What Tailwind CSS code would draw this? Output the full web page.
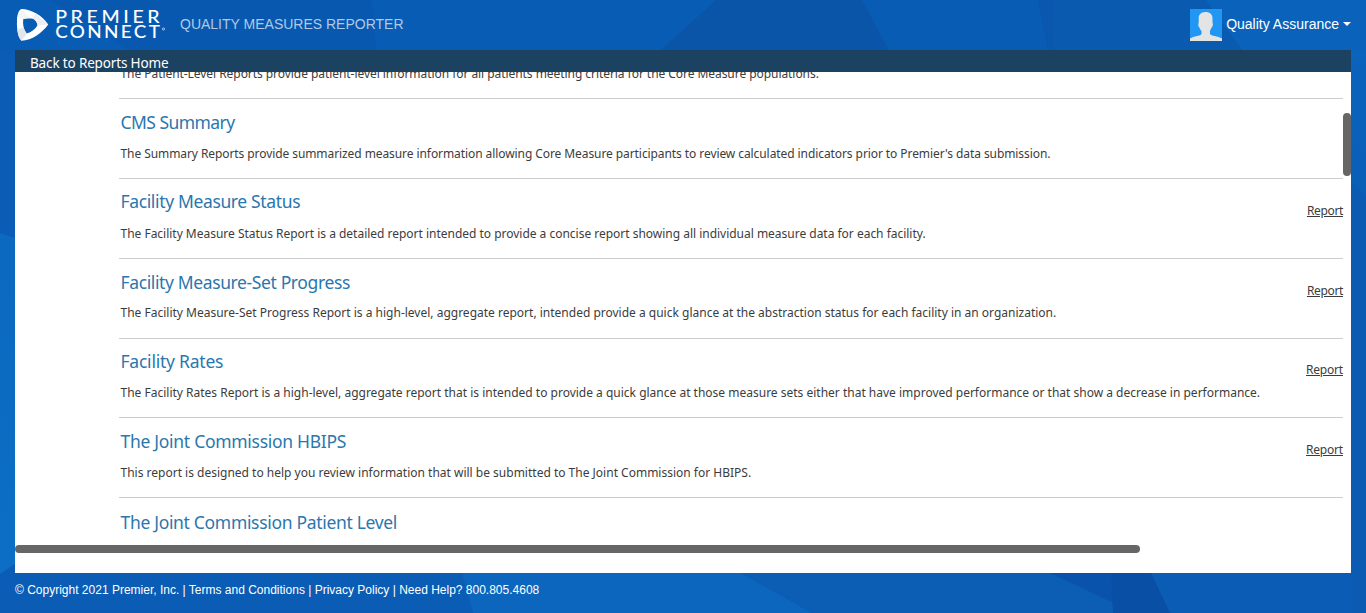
<!DOCTYPE html>
<html lang="en">
<head>
<meta charset="utf-8">
<title>Quality Measures Reporter</title>
<script src="https://cdn.jsdelivr.net/npm/@tailwindcss/browser@4"></script>
</head>
<body class="relative isolate flex h-[613px] w-[1366px] flex-col overflow-hidden bg-[#0a5cb5] font-['Liberation_Sans',Arial,sans-serif]">
<svg class="absolute inset-0 -z-10" width="1366" height="613" viewBox="0 0 1366 613" aria-hidden="true">
  <defs><linearGradient id="r" x1="0" y1="0" x2="0" y2="1"><stop offset="0" stop-color="#0a63bc"/><stop offset="1" stop-color="#0a5bb2"/></linearGradient>
  <linearGradient id="l" x1="0" y1="0" x2="0" y2="1"><stop offset="0" stop-color="#0b69bf"/><stop offset="1" stop-color="#0c6ec5"/></linearGradient></defs>
  <path d="M0 0H1366V50H0Z" fill="#085cb4"/>
  <path d="M50 0H372L376 50H128Z" fill="#0958af"/>
  <path d="M716 0H862L889 50H661Z" fill="#0b55a9"/>
  <path d="M876 30L880 34L888 50H870Z" fill="#0a55aa"/>
  <path d="M1038 0H1206L1242 50H1048Z" fill="#0a5bb0"/>
  <path d="M1038 0H1054V50H1048Z" fill="#0957ae"/>
  <path d="M1206 0H1366V220L1351 180V50H1242Z" fill="#0a62bb"/>
  <path d="M1351 50H1366V350H1351Z" fill="url(#r)"/>
  <path d="M1351 181L1366 196V613H1351Z" fill="#0a5bb1"/>
  <path d="M0 233L15 238V564L0 574Z" fill="url(#l)"/>
  <path d="M462 573H741L812 613H473Z" fill="#0c66be"/>
  <path d="M741 573H1052L1136 613H812Z" fill="#0b5eb3"/>
  <path d="M1050 573H1150L1170 613H1135Z" fill="#0a53ac"/>
  <path d="M1111 573H1151L1170 613H1113Z" fill="#0a4fa6"/>
</svg>
<header class="flex h-[50px] shrink-0 pl-[16px] pr-[15px]">
  <svg class="shrink-0" width="152" height="50" viewBox="16 0 152 50" fill="#fff">
    <path fill-rule="evenodd" d="M21.500 9C31 9 43 16 48.200 24.500C42 33 32 40.500 21.500 40.800C18 37 16.500 29 17 20C17.200 15 18.500 10 21.500 9ZM23.300 19C22.500 24 23.500 29 26.500 33.500C31.500 32 35.500 29 37.500 25.200C37 22 35.500 20 33.500 18.800C30 17.800 26.500 18 23.300 19Z"/>
    <path d="M17.300 30C18 35 19 38.500 21.500 40.800L27 33.500C25 31.500 24 29.500 23.600 27Z" fill="#e3e6ea"/>
    <path d="M35.500 13.500L48.200 24.500L37.500 25.200C37 22 35.500 20 32.500 18.500Z" fill="#eceef1"/>
    <path d="M17.300 18L21.500 9L31 18.200C28 18 26 18.200 23.300 19Z" fill="#f3f5f7"/>
    <g font-family="Lato" font-size="16.300" font-weight="500">
      <text x="55.200" y="23.200" letter-spacing="3" textLength="108" lengthAdjust="spacingAndGlyphs">PREMIER</text>
      <text x="55.200" y="38.400" letter-spacing="2" textLength="107" lengthAdjust="spacingAndGlyphs">CONNECT</text>
    </g>
    <circle cx="163.500" cy="29" r="1.100" fill="none" stroke="#fff" stroke-width=".6"/>
  </svg>
  <div class="ml-[12px] pt-[14px] text-[14px] leading-5 whitespace-nowrap text-[#aecae8]">QUALITY MEASURES REPORTER</div>
  <div class="ml-auto flex pt-[9px]">
    <svg width="32" height="32" viewBox="0 0 32 32"><path fill="#2196f3" d="M0 0h32v32H0z"/><path fill="#e4e4e4" d="M15.500 3C20 3 22.700 5.500 22.500 10V14C23.300 14.500 22.800 18 21.500 18.500C21 20.500 20 21 20 22V25C21 27 28 27 32 29.500V32H0V29.500C4 27 10.500 27 11.500 25V22C10.500 21 10 20 9.500 18.500C8.200 18 8 14.500 8.700 14V9C8.500 6 11 3 15.500 3Z"/></svg>
    <div class="ml-[4px] pt-[5px] text-[14px] leading-5 whitespace-nowrap text-white">Quality Assurance</div>
    <svg class="ml-[4px] mt-[13px]" width="8" height="4" viewBox="0 0 8 4"><path fill="#fff" d="M0 0h8L4 4z"/></svg>
  </div>
</header>
<main class="relative mx-[15px] flex h-[523px] flex-col bg-white font-['Noto_Sans',sans-serif]">
  <nav class="h-[22px] shrink-0 bg-[#1c4261] pl-[15px] pt-[3px] text-[13.5px] leading-5 tracking-[-0.15px] text-white"><a class="whitespace-nowrap">Back to Reports Home</a></nav>
  <div class="h-[473px] overflow-hidden pl-[104px] pr-[8px] text-[12px] text-[#3c3c3c]">
    <section class="flow-root h-[27px] border-b border-[#ccc] pl-[1.5px]"><p class="-mt-[8px] leading-5 tracking-[-0.055px] whitespace-nowrap">The Patient-Level Reports provide patient-level information for all patients meeting criteria for the Core Measure populations.</p></section>
    <section class="h-[80px] border-b border-[#ccc] pl-[1.5px] pt-[11px]">
      <h2 class="text-[17.5px] leading-6 tracking-[-0.55px] whitespace-nowrap text-[#2a77ae]">CMS Summary</h2>
      <p class="mt-[10px] leading-5 tracking-[-0.08px] whitespace-nowrap">The Summary Reports provide summarized measure information allowing Core Measure participants to review calculated indicators prior to Premier's data submission.</p>
    </section>
    <section class="flex h-[80px] justify-between border-b border-[#ccc] pl-[1.5px] pt-[10px]">
      <div><h2 class="text-[17.5px] leading-6 tracking-[-0.36px] whitespace-nowrap text-[#2a77ae]">Facility Measure Status</h2>
      <p class="mt-[11px] leading-5 tracking-[-0.015px] whitespace-nowrap">The Facility Measure Status Report is a detailed report intended to provide a concise report showing all individual measure data for each facility.</p></div>
      <a class="mt-[12px] leading-5 tracking-[-0.35px] underline">Report</a>
    </section>
    <section class="flex h-[80px] justify-between border-b border-[#ccc] pl-[1.5px] pt-[11px]">
      <div><h2 class="text-[17.5px] leading-6 tracking-[-0.38px] whitespace-nowrap text-[#2a77ae]">Facility Measure-Set Progress</h2>
      <p class="mt-[9px] leading-5 whitespace-nowrap">The Facility Measure-Set Progress Report is a high-level, aggregate report, intended provide a quick glance at the abstraction status for each facility in an organization.</p></div>
      <a class="mt-[11px] leading-5 tracking-[-0.35px] underline">Report</a>
    </section>
    <section class="flex h-[79px] justify-between border-b border-[#ccc] pl-[1.5px] pt-[10px]">
      <div><h2 class="text-[17.5px] leading-6 tracking-[-0.23px] whitespace-nowrap text-[#2a77ae]">Facility Rates</h2>
      <p class="mt-[10px] leading-5 whitespace-nowrap">The Facility Rates Report is a high-level, aggregate report that is intended to provide a quick glance at those measure sets either that have improved performance or that show a decrease in performance.</p></div>
      <a class="mt-[11px] leading-5 tracking-[-0.2px] underline">Report</a>
    </section>
    <section class="flex h-[80px] justify-between border-b border-[#ccc] pl-[1.5px] pt-[11px]">
      <div><h2 class="text-[17.5px] leading-6 tracking-[-0.29px] whitespace-nowrap text-[#2a77ae]">The Joint Commission HBIPS</h2>
      <p class="mt-[10px] leading-5 whitespace-nowrap">This report is designed to help you review information that will be submitted to The Joint Commission for HBIPS.</p></div>
      <a class="mt-[11px] leading-5 tracking-[-0.2px] underline">Report</a>
    </section>
    <section class="pl-[1.5px] pt-[12px]"><h2 class="text-[17.5px] leading-6 tracking-[-0.32px] whitespace-nowrap text-[#2a77ae]">The Joint Commission Patient Level</h2></section>
  </div>
  <div class="h-[8px] w-[1125px] rounded-[4px] bg-[#666]"></div>
  <div class="absolute right-0 top-[63px] h-[63px] w-[8px] rounded-[4px] bg-[#666]"></div>
</main>
<footer class="pl-[15px] pt-[7px] text-[12px] leading-5 whitespace-nowrap text-white">© Copyright 2021 Premier, Inc. | Terms and Conditions | Privacy Policy | Need Help? 800.805.4608</footer>
</body>
</html>
